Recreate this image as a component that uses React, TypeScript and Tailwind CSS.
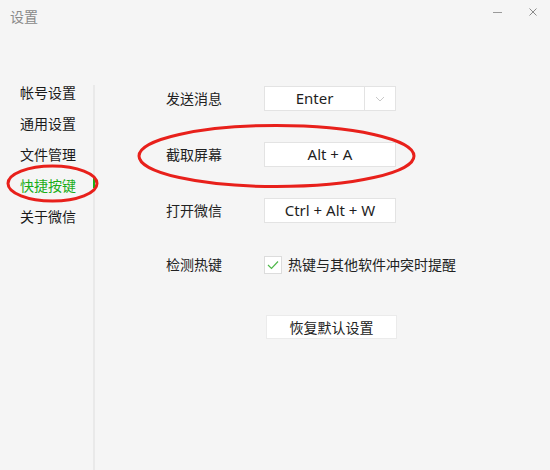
import React from 'react';

const navItems = ['帐号设置', '通用设置', '文件管理', '快捷按键', '关于微信'];

const ShortcutBox: React.FC<{ text: string; dropdown?: boolean }> = ({ text, dropdown }) => (
  <div className="w-[132px] h-[25px] bg-white border border-[#e3e3e3] flex items-center">
    <div className="flex-1 h-full flex items-center justify-center text-[15px] text-[#1e1e1e]">{text}</div>
    {dropdown && (
      <div className="w-[31px] h-full border-l border-[#e3e3e3] flex items-center justify-center">
        <svg width="10" height="6" viewBox="0 0 10 6">
          <path d="M1 1 L5 5 L9 1" fill="none" stroke="#c8c8c8" strokeWidth="1" />
        </svg>
      </div>
    )}
  </div>
);

export default function App() {
  return (
    <div className="relative w-[550px] h-[470px] overflow-hidden bg-[#f5f5f5] font-['Noto_Sans','Noto_Sans_CJK_SC',sans-serif] text-[#222]">
      {/* Title bar */}
      <div className="h-[77px] flex items-start justify-between">
        <div className="pl-[10px] pt-[7px] text-[14px] leading-[20px] text-[#8a8a8a]">设置</div>
        <div className="flex items-center pt-[8px]">
          <div className="w-[9px] h-px bg-[#9a9a9a] mr-[27px]" />
          <svg width="8" height="8" viewBox="0 0 8 8" className="mr-[13px]">
            <path d="M0.5 0.5 L7.5 7.5 M7.5 0.5 L0.5 7.5" stroke="#8a8a8a" strokeWidth="1" />
          </svg>
        </div>
      </div>

      <div className="flex h-[393px]">
        {/* Sidebar */}
        <div className="w-[93px] flex flex-col">
          {navItems.map((item) => (
            <div
              key={item}
              className={`h-[31px] flex items-center pl-[20px] text-[14px] ${
                item === '快捷按键' ? 'text-[#1aad19]' : 'text-[#1a1a1a]'
              }`}
            >
              {item}
            </div>
          ))}
        </div>
        <div className="mt-[8px] w-[2px] bg-[#e9e9e9] flex flex-col">
          <div className="mt-[93px] h-[10px] w-[2px] bg-[#1aad19]" />
        </div>

        {/* Content */}
        <div className="flex-1 pl-[71px] pt-[9px] text-[14px]">
          <div className="flex items-center h-[25px]">
            <div className="w-[98px]">发送消息</div>
            <ShortcutBox text="Enter" dropdown />
          </div>
          <div className="flex items-center h-[25px] mt-[31px]">
            <div className="w-[98px]">截取屏幕</div>
            <ShortcutBox text="Alt + A" />
          </div>
          <div className="flex items-center h-[25px] mt-[31px]">
            <div className="w-[98px]">打开微信</div>
            <ShortcutBox text="Ctrl + Alt + W" />
          </div>
          <div className="flex items-center h-[25px] mt-[29px]">
            <div className="w-[98px]">检测热键</div>
            <div className="w-[18px] h-[18px] bg-white border border-[#dcdcdc] flex items-center justify-center">
              <svg width="12" height="10" viewBox="0 0 12 10">
                <path d="M1 5 L4.5 8.5 L11 1.5" fill="none" stroke="#4fb84a" strokeWidth="1.2" />
              </svg>
            </div>
            <div className="ml-[6px]">热键与其他软件冲突时提醒</div>
          </div>
          <div className="mt-[38px] ml-[100px] w-[131px] h-[24px] bg-white border border-[#ebebeb] flex items-center justify-center">
            恢复默认设置
          </div>
        </div>
      </div>

      {/* Red annotation marks */}
      <svg className="absolute inset-0 pointer-events-none" width="550" height="470">
        <ellipse cx="52.5" cy="183.5" rx="44.5" ry="17.5" fill="none" stroke="#e8201b" strokeWidth="3" />
        <ellipse cx="276.5" cy="156" rx="137.5" ry="30.5" fill="none" stroke="#e8201b" strokeWidth="3" />
      </svg>
    </div>
  );
}
